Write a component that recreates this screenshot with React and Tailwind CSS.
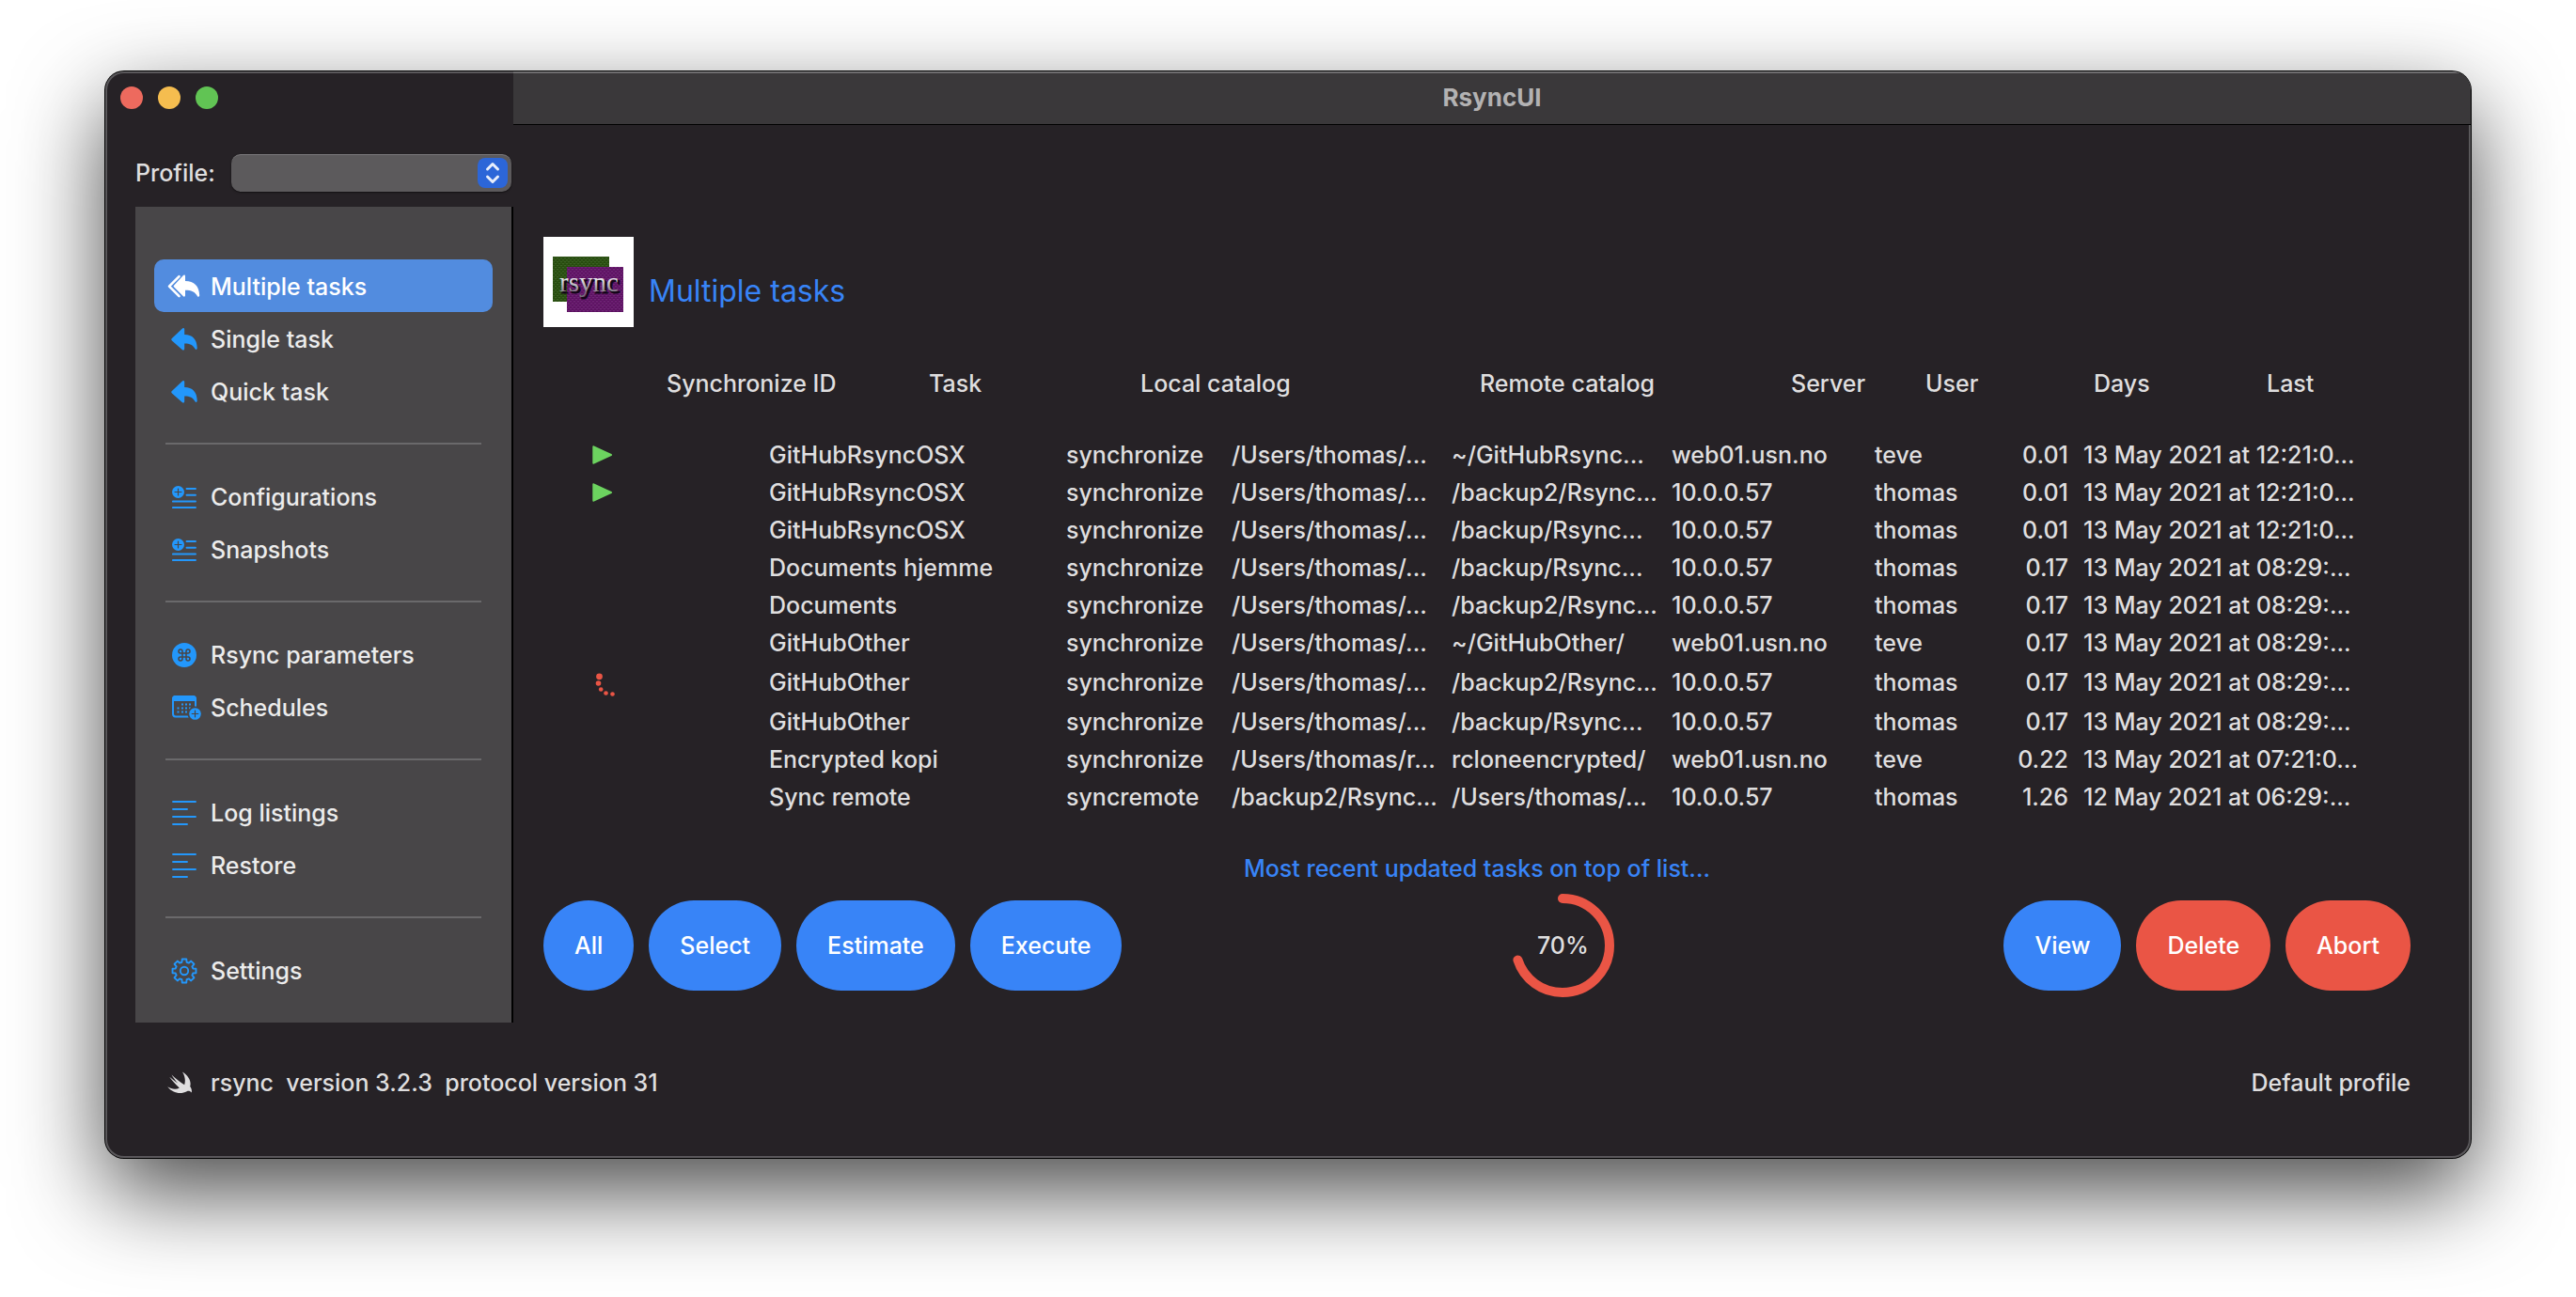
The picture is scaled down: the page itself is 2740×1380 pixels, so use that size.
import React from "react";

/* ---------- icons ---------- */

function ReplyAllIcon() {
  return (
    <svg viewBox="0 0 36 26" className="h-[26px] w-9" aria-hidden="true">
      <path
        d="M12.5 2.2 L2 12.6 L12.5 23.2"
        fill="none"
        stroke="#fff"
        strokeWidth="2.6"
        strokeLinecap="round"
        strokeLinejoin="round"
      />
      <path
        d="M19 1.9v5.2c9.6 0 14.8 5.6 15.2 15 .1 1.8-1.5 2.2-2.3.8-2.4-4.4-6.3-6.2-12.9-6.2V22c0 1.800-1.200 2.100-2.300 1.100L7.200 13.600c-.8-.8-.8-1.500 0-2.200L16.700 1.200c1.100-1.100 2.300-.7 2.300.7z"
        fill="#fff"
      />
    </svg>
  );
}

function ReplyIcon() {
  return (
    <svg viewBox="0 0 28 24" className="h-6 w-7" aria-hidden="true">
      <path
        d="M14.200 1.600v5.300c8.600 0 13.200 5 13.500 14.200.1 1.900-1.400 2.400-2.300.9-2.200-4-5.400-5.600-11.200-5.600v5.500c0 1.700-1.400 2.100-2.500 1.100L.9 13.400c-.9-.8-.9-1.600 0-2.400L11.700.7c1.100-1.100 2.500-.7 2.500.9z"
        fill="#2397fb"
      />
    </svg>
  );
}

function ListPlusIcon() {
  return (
    <svg viewBox="0 0 26 24" className="h-6 w-[26px]" aria-hidden="true">
      <circle cx="6.500" cy="6.500" r="6.500" fill="#2397fb" />
      <path d="M6.500 3v7M3 6.500h7" stroke="#484648" strokeWidth="1.200" strokeLinecap="round" />
      <path
        d="M15.500 3h9.500M15.500 9.800h9.500M.9 16.500h24.100M.9 23h24.100"
        stroke="#2397fb"
        strokeWidth="1.900"
        strokeLinecap="round"
      />
    </svg>
  );
}

function CommandIcon() {
  return (
    <svg viewBox="0 0 26 26" className="size-[26px]" aria-hidden="true">
      <circle cx="13" cy="13" r="13" fill="#2397fb" />
      <path
        d="M11 11h4v4h-4zM11 11h-2a2 2 0 1 1 2-2zM15 11v-2a2 2 0 1 1 2 2zM15 15h2a2 2 0 1 1-2 2zM11 15v2a2 2 0 1 1-2-2z"
        fill="none"
        stroke="#484648"
        strokeWidth="1.500"
      />
    </svg>
  );
}

function CalendarPlusIcon() {
  const dots = [
    [11, 9.500], [15, 9.500], [19, 9.500],
    [6.500, 13.500], [11, 13.500], [15, 13.500], [19, 13.500],
    [6.500, 17.500], [11, 17.500], [15, 17.500],
  ];
  return (
    <svg viewBox="0 0 31 26" className="ml-1 h-[26px] w-[31px]" aria-hidden="true">
      <rect x="1" y="1" width="24" height="21.500" rx="3" fill="none" stroke="#2397fb" strokeWidth="2" />
      <path d="M0 6V4a4 4 0 0 1 4-4h18a4 4 0 0 1 4 4v2z" fill="#2397fb" />
      {dots.map(([x, y]) => (
        <rect key={`${x}-${y}`} x={x - 1} y={y - 1} width="2" height="2" fill="#2397fb" />
      ))}
      <circle cx="24.500" cy="19.500" r="8" fill="#484648" />
      <circle cx="24.500" cy="19.500" r="6.300" fill="#2397fb" />
      <path d="M24.500 16.200v6.600M21.200 19.500h6.600" stroke="#484648" strokeWidth="1.200" strokeLinecap="round" />
    </svg>
  );
}

function LinesIcon() {
  return (
    <svg viewBox="0 0 26 26" className="size-[26px]" aria-hidden="true">
      <path
        d="M1 1h24M1 9h15M1 17h24M1 25h15"
        stroke="#2397fb"
        strokeWidth="1.900"
        strokeLinecap="round"
      />
    </svg>
  );
}

function GearIcon() {
  const teeth = [];
  for (let i = 0; i < 8; i++) {
    const a = (i * Math.PI) / 4 - Math.PI / 2;
    const at = (r, d) => `${(14 + r * Math.cos(a + d)).toFixed(2)} ${(14 + r * Math.sin(a + d)).toFixed(2)}`;
    teeth.push(`${i ? "L" : "M"}${at(9.600, -0.270)}L${at(12.700, -0.180)}L${at(12.700, 0.180)}L${at(9.600, 0.270)}`);
  }
  return (
    <svg viewBox="0 0 28 28" className="size-7" aria-hidden="true">
      <path d={`${teeth.join("")}Z`} fill="none" stroke="#2397fb" strokeWidth="1.900" strokeLinejoin="round" />
      <circle cx="14" cy="14" r="4.200" fill="none" stroke="#2397fb" strokeWidth="1.900" />
    </svg>
  );
}

function SwiftIcon() {
  return (
    <svg viewBox="0 0 26 24" className="h-6 w-[26px]" aria-hidden="true">
      <path
        d="M16 .5c6.600 4.200 9.800 10 8.200 15.400 1.800 2.300 2 4.700 1.500 6.700-1.500-2-3.300-2.100-5-1.300-6.500 3.500-15.400 1.800-20.500-5 4.200 2.500 9 3.200 12.600 1.200C9 14.200 5 9.700 2.200 5.800c3 2.600 5.800 4.700 9 6.800C8.700 9.700 6 6 4.500 3.400 8.200 6.800 13 11 18.200 14.200 19.400 10 19 5.200 16 .5z"
        fill="#dfdedf"
      />
    </svg>
  );
}

function PlayIcon() {
  return (
    <svg viewBox="0 0 22 20" className="h-5 w-[22px]" role="img" aria-label="Ready">
      <path d="M.3 1.300C.3.300 1 .1 1.900.500L20.300 9c1.100.5 1.100 1.500 0 2L1.900 19.500C1 19.900.3 19.700.3 18.700z" fill="#6cd35f" />
    </svg>
  );
}

function BusyIcon() {
  return (
    <svg viewBox="-3 -5 26 30" className="h-[30px] w-[26px]" role="img" aria-label="Running">
      <g fill="#ea5545">
        <circle cx="4.500" cy="3.800" r="3.400" />
        <circle cx="3.500" cy="11" r="2.800" />
        <circle cx="6.200" cy="17.500" r="2.300" />
        <circle cx="11.500" cy="21.500" r="2.300" />
        <circle cx="18.500" cy="22.500" r="2.300" />
      </g>
    </svg>
  );
}

function RsyncLogo() {
  return (
    <svg viewBox="0 0 96 96" className="size-24" role="img" aria-label="rsync logo">
      <defs>
        <linearGradient id="silver" x1="0" y1="0" x2="0" y2="1">
          <stop offset="0.300" stopColor="#ffffff" />
          <stop offset="0.900" stopColor="#77707c" />
        </linearGradient>
        <pattern id="weave" width="4" height="4" patternUnits="userSpaceOnUse">
          <path d="M0 0h2v1H0zM2 2h2v1H2z" fill="#fff" opacity="0.080" />
          <path d="M2 1h2v1H2zM0 3h2v1H0z" fill="#000" opacity="0.120" />
        </pattern>
      </defs>
      <rect width="96" height="96" fill="#fff" />
      <rect x="10" y="21" width="60" height="48" fill="#2b5212" />
      <rect x="10" y="21" width="60" height="48" fill="url(#weave)" />
      <rect x="25" y="32" width="60" height="48" fill="#64166a" />
      <rect x="25" y="32" width="60" height="48" fill="url(#weave)" />
      <g fontFamily="Liberation Serif, serif" fontSize="29" fontWeight="400">
        <text x="19" y="60" fill="#120616" stroke="#120616">rsync</text>
        <text x="17" y="58" fill="url(#silver)">rsync</text>
      </g>
    </svg>
  );
}

/* ---------- data ---------- */

const groups = [
  [["Multiple tasks", ReplyAllIcon, true], ["Single task", ReplyIcon], ["Quick task", ReplyIcon]],
  [["Configurations", ListPlusIcon], ["Snapshots", ListPlusIcon]],
  [["Rsync parameters", CommandIcon], ["Schedules", CalendarPlusIcon]],
  [["Log listings", LinesIcon], ["Restore", LinesIcon]],
  [["Settings", GearIcon]],
];

const headers = ["Synchronize ID", "Task", "Local catalog", "Remote catalog", "Server", "User", "Days", "Last"];

const rows = [
  ["ready", "GitHubRsyncOSX", "synchronize", "/Users/thomas/...", "~/GitHubRsync...", "web01.usn.no", "teve", "0.01", "13 May 2021 at 12:21:0..."],
  ["ready", "GitHubRsyncOSX", "synchronize", "/Users/thomas/...", "/backup2/Rsync...", "10.0.0.57", "thomas", "0.01", "13 May 2021 at 12:21:0..."],
  ["", "GitHubRsyncOSX", "synchronize", "/Users/thomas/...", "/backup/Rsync...", "10.0.0.57", "thomas", "0.01", "13 May 2021 at 12:21:0..."],
  ["", "Documents hjemme", "synchronize", "/Users/thomas/...", "/backup/Rsync...", "10.0.0.57", "thomas", "0.17", "13 May 2021 at 08:29:..."],
  ["", "Documents", "synchronize", "/Users/thomas/...", "/backup2/Rsync...", "10.0.0.57", "thomas", "0.17", "13 May 2021 at 08:29:..."],
  ["", "GitHubOther", "synchronize", "/Users/thomas/...", "~/GitHubOther/", "web01.usn.no", "teve", "0.17", "13 May 2021 at 08:29:..."],
  ["busy", "GitHubOther", "synchronize", "/Users/thomas/...", "/backup2/Rsync...", "10.0.0.57", "thomas", "0.17", "13 May 2021 at 08:29:..."],
  ["", "GitHubOther", "synchronize", "/Users/thomas/...", "/backup/Rsync...", "10.0.0.57", "thomas", "0.17", "13 May 2021 at 08:29:..."],
  ["", "Encrypted kopi", "synchronize", "/Users/thomas/r...", "rcloneencrypted/", "web01.usn.no", "teve", "0.22", "13 May 2021 at 07:21:0..."],
  ["", "Sync remote", "syncremote", "/backup2/Rsync...", "/Users/thomas/...", "10.0.0.57", "thomas", "1.26", "12 May 2021 at 06:29:..."],
];

/* ---------- parts ---------- */

function Sidebar() {
  return (
    <aside className="flex w-[434px] shrink-0 flex-col">
      <div className="flex h-14 items-center gap-4 px-4">
        <button aria-label="Close" className="size-6 rounded-full bg-[#ed6a5e]" />
        <button aria-label="Minimize" className="size-6 rounded-full bg-[#f5bd4f]" />
        <button aria-label="Zoom" className="size-6 rounded-full bg-[#61c454]" />
      </div>
      <div className="mt-8 flex h-10 items-center justify-between pr-0.5 pl-8">
        <label htmlFor="profile">Profile:</label>
        <div className="relative w-[298px]">
          <select
            id="profile"
            className="block h-10 w-full appearance-none rounded-[10px] border-t border-[#7b797c] bg-[#5c5a5c] px-3 shadow-[0_1px_2px_#0008]"
          >
            <option value="" />
          </select>
          <svg viewBox="0 0 32 32" className="pointer-events-none absolute top-1 right-1 size-8 rounded-lg bg-[#2c66d8]" aria-hidden="true">
            <path
              d="M10.500 12 L16 6.500 L21.500 12 M10.500 20 L16 25.500 L21.500 20"
              fill="none"
              stroke="#e8eefb"
              strokeWidth="3"
              strokeLinecap="round"
              strokeLinejoin="round"
            />
          </svg>
        </div>
      </div>
      <nav className="mt-4 ml-8 border-r-2 border-black bg-[#484648] px-5 pt-14 pb-7">
        {groups.map((items, i) => (
          <React.Fragment key={items[0][0]}>
            {i > 0 && <hr className="mx-3 my-[27px] border-t-2 border-[#6a696b]" />}
            {items.map(([name, Icon, active]) => (
              <button
                key={name}
                className={
                  active
                    ? "flex h-14 w-full items-center gap-2.5 rounded-[10px] bg-[#528cdf] pt-0.5 pl-3.5 text-white"
                    : "flex h-14 w-full items-center gap-2.5 pt-0.5 pl-3.5 text-[#ececec]"
                }
              >
                <span className="flex w-9 justify-center">
                  <Icon />
                </span>
                {name}
              </button>
            ))}
          </React.Fragment>
        ))}
      </nav>
    </aside>
  );
}

function TaskTable() {
  return (
    <table className="mt-[42px] block w-full">
      <thead className="block">
        <tr className="grid h-9 grid-cols-[minmax(0,131fr)_minmax(0,279fr)_minmax(0,225fr)_minmax(0,361fr)_minmax(0,331fr)_minmax(0,143fr)_minmax(0,179fr)_minmax(0,184fr)_minmax(0,153fr)] items-center">
          <td />
          {headers.map((h) => (
            <th key={h} scope="col" className="text-left font-medium whitespace-nowrap">
              {h}
            </th>
          ))}
        </tr>
      </thead>
      <tbody className="mt-[38px] block">
        {rows.map(([state, name, task, local, remote, server, user, days, last], i) => (
          <tr
            key={i}
            className="grid min-h-10 grid-cols-[minmax(0,240fr)_minmax(0,316fr)_minmax(0,176fr)_minmax(0,234fr)_minmax(0,234fr)_minmax(0,216fr)_minmax(0,120fr)_minmax(0,86fr)_minmax(0,364fr)] items-center whitespace-nowrap"
          >
            <td className="pl-[52px]">
              {state === "ready" && <PlayIcon />}
              {state === "busy" && (
                <div className="py-[7px]">
                  <BusyIcon />
                </div>
              )}
            </td>
            <td>{name}</td>
            <td>{task}</td>
            <td>{local}</td>
            <td>{remote}</td>
            <td>{server}</td>
            <td>{user}</td>
            <td className="text-right">{days}</td>
            <td className="pl-4">{last}</td>
          </tr>
        ))}
      </tbody>
    </table>
  );
}

function Pill({ children, danger }) {
  return (
    <button
      className={
        danger
          ? "h-24 rounded-full bg-[#ea5545] px-[33px] text-white"
          : "h-24 rounded-full bg-[#3884f7] px-[33px] text-white"
      }
    >
      {children}
    </button>
  );
}

function ProgressRing({ percent }) {
  return (
    <div className="relative flex size-[110px] items-center justify-center">
      <svg viewBox="0 0 110 110" className="absolute inset-0" aria-hidden="true">
        <circle
          cx="55"
          cy="55"
          r="50"
          fill="none"
          stroke="#ea5545"
          strokeWidth="10"
          strokeLinecap="round"
          pathLength="100"
          strokeDasharray={`${percent} 100`}
          transform="rotate(-90 55 55)"
        />
      </svg>
      <span>{percent}%</span>
    </div>
  );
}

export default function App() {
  return (
    <div className="min-h-screen bg-white px-28 pt-[76px] pb-[146px] font-['Inter',sans-serif] text-[25px] leading-8 font-medium text-[#dfdedf]">
      <div className="rounded-[20px] bg-[#262226] shadow-[0_0_0_1px_#000,0_36px_96px_#000000b8]">
        <div className="overflow-hidden rounded-[20px] shadow-[inset_0_0_0_2px_#5a585b]">
          <div className="flex">
            <Sidebar />
            <div className="flex min-w-0 flex-1 flex-col">
              <header className="flex h-[57px] items-center justify-center border-b border-black bg-[#3a383a] shadow-[inset_0_2px_0_#6e6d6f]">
                <h1 className="text-[26px] font-bold text-[#b3b2b3]">RsyncUI</h1>
              </header>
              <main className="mt-[119px] pr-16 pl-8">
                <div className="flex items-center gap-4">
                  <RsyncLogo />
                  <h2 className="mt-5 text-[32px] leading-10 font-normal text-[#3884f7]">Multiple tasks</h2>
                </div>
                <TaskTable />
                <p className="mt-10 text-center text-[#3884f7]">Most recent updated tasks on top of list...</p>
                <div className="mt-[11px] flex items-center justify-between">
                  <div className="flex gap-4">
                    <Pill>All</Pill>
                    <Pill>Select</Pill>
                    <Pill>Estimate</Pill>
                    <Pill>Execute</Pill>
                  </div>
                  <ProgressRing percent={70} />
                  <div className="flex gap-4">
                    <Pill>View</Pill>
                    <Pill danger>Delete</Pill>
                    <Pill danger>Abort</Pill>
                  </div>
                </div>
              </main>
            </div>
          </div>
          <footer className="flex items-center justify-between pt-12 pr-16 pb-16 pl-[66px]">
            <div className="flex items-center gap-5">
              <SwiftIcon />
              <span className="whitespace-pre">rsync  version 3.2.3  protocol version 31</span>
            </div>
            <span>Default profile</span>
          </footer>
        </div>
      </div>
    </div>
  );
}
